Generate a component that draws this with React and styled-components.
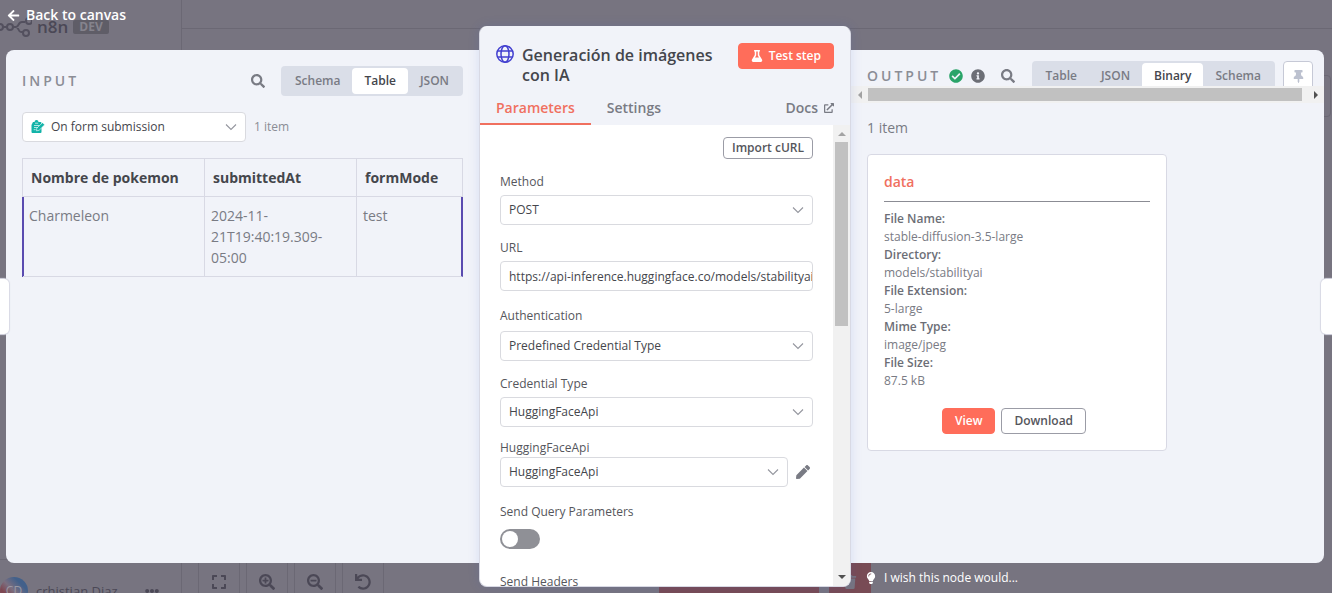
import React from "react";
import styled, { createGlobalStyle, css } from "styled-components";
import {
  FaArrowLeft,
  FaCheckCircle,
  FaExpand,
  FaExternalLinkAlt,
  FaEllipsisH,
  FaFlask,
  FaInfoCircle,
  FaLightbulb,
  FaPen,
  FaSearch,
  FaSearchMinus,
  FaSearchPlus,
  FaThumbtack,
  FaTrash,
  FaUndo,
} from "react-icons/fa";

const c = {
  veil: "#777480",
  veilLine: "#6b6874",
  veilInk: "#4b4856",
  danger: "#784b55",
  panel: "#f1f3f9",
  white: "#ffffff",
  line: "#d8d9e4",
  inputLine: "#d9dadf",
  tabs: "#dadee8",
  coral: "#ff6d5a",
  coralText: "#f0705f",
  ink: "#44464c",
  text: "#55565c",
  muted: "#797b84",
  faint: "#8b8d96",
  green: "#2aa469",
  purple: "#5a4bb0",
  track: "#f1f1f1",
  thumb: "#c1c1c1",
};

const GlobalStyle = createGlobalStyle`
  *, *::before, *::after { box-sizing: border-box; }
  body {
    margin: 0;
    background: ${c.veil};
    color: ${c.text};
    font: 400 12px/18px "Open Sans", "Noto Sans", sans-serif;
  }
  button, input, select { font: inherit; color: inherit; margin: 0; }
  button { cursor: pointer; padding: 0; border: 0; background: none; }
  a { color: inherit; text-decoration: none; }
  svg { display: block; flex: none; }
`;

const Screen = styled.div`
  position: relative;
  height: 100vh;
  overflow: hidden;
`;

/* ---------- dimmed editor behind the dialog ---------- */

const Backdrop = styled.div`
  position: absolute;
  inset: 0;
  display: flex;
  color: ${c.veilInk};
`;

const Sidebar = styled.div`
  width: 182px;
  flex: none;
  display: flex;
  flex-direction: column;
  justify-content: space-between;
  border-right: 1px solid ${c.veilLine};
`;

const Brand = styled.div`
  display: flex;
  align-items: center;
  gap: 5px;
  padding-top: 16px;
  font-size: 17px;
  line-height: 22px;
  font-weight: 600;
`;

const DevBadge = styled.span`
  padding: 0 6px;
  border-radius: 2px;
  background: #5f5d67;
  color: #85838d;
  font-size: 12px;
  line-height: 14px;
  font-weight: 700;
`;

const UserRow = styled.div`
  display: flex;
  align-items: center;
  height: 54px;
  margin-bottom: -20px;
  border-top: 1px solid ${c.veilLine};
  padding-top: 8px;
`;

const UserName = styled.span`
  padding: 0 14px 0 8px;
  font-size: 13px;
  white-space: nowrap;
`;

const Avatar = styled.span`
  width: 28px;
  height: 28px;
  flex: none;
  border-radius: 50%;
  background: linear-gradient(45deg, #7e4752 30%, #7b6f80 50%, #42608a 75%);
  color: #9b99a4;
  text-align: center;
  line-height: 28px;
`;

const Canvas = styled.div`
  flex: 1;
  min-width: 0;
  display: flex;
  flex-direction: column;
  justify-content: space-between;
`;

const CanvasTop = styled.div`
  display: flex;
  flex-direction: column;
  align-items: flex-end;
  gap: 46px;
`;

const TopBar = styled.div`
  align-self: stretch;
  height: 29px;
  border-bottom: 1px solid ${c.veilLine};
`;

const NodeMenu = styled.div`
  width: 42px;
  height: 42px;
  margin-right: 1px;
  border: 1px solid ${c.veilLine};
  border-radius: 4px;
`;

const CanvasFooter = styled.div`
  display: flex;
  align-items: flex-end;
  justify-content: space-between;
  height: 34px;
`;

const CanvasTools = styled.div`
  display: flex;
  gap: 6px;
  padding-left: 16px;
`;

const CanvasTool = styled.button`
  display: grid;
  place-items: center;
  width: 42px;
  height: 34px;
  padding-top: 12px;
  border: solid ${c.veilLine};
  border-width: 0 1px;
`;

const DangerTools = styled.div`
  display: flex;
  gap: 10px;
  flex: 1;
  padding-left: 275px;
`;

const DangerTool = styled.button`
  display: grid;
  place-items: center;
  width: ${(p) => (p.$wide ? 160 : 42)}px;
  height: 34px;
  padding-top: 12px;
  background: ${c.danger};
  color: ${c.veil};
`;

/* ---------- dialog frame ---------- */

const Dialog = styled.main`
  position: relative;
  height: 100%;
  display: flex;
  flex-direction: column;
`;

const BackButton = styled.button`
  display: flex;
  align-items: center;
  align-self: flex-start;
  gap: 6px;
  height: 26px;
  padding: 4px 7px 0;
  color: ${c.white};
  font-size: 14px;
  font-weight: 600;
`;

const Columns = styled.div`
  flex: 1;
  min-height: 0;
  display: flex;
  padding: 0 8px 0 6px;
`;

const SideColumn = styled.div`
  flex: 1;
  min-width: 0;
  display: flex;
  flex-direction: column;
  padding-top: 24px;
`;

const SidePanel = styled.section`
  flex: 1;
  min-height: 0;
  overflow: hidden;
  background: ${c.panel};
  border-radius: ${(p) => (p.$side === "left" ? "8px 0 0 8px" : "0 8px 8px 0")};
`;

const Footer = styled.div`
  display: flex;
  align-items: center;
  height: 30px;
  padding-left: 14px;
`;

const FeedbackLink = styled.a`
  display: flex;
  align-items: center;
  gap: 7px;
  color: ${c.white};
  font-weight: 500;
`;

const EdgeHandle = styled.button`
  position: absolute;
  top: 279px;
  ${(p) => (p.$side === "left" ? "left: 0" : "right: 0")};
  width: ${(p) => (p.$side === "left" ? 9 : 11)}px;
  height: 55px;
  background: ${c.white};
  border-radius: ${(p) => (p.$side === "left" ? "0 5px 5px 0" : "5px 0 0 5px")};
  box-shadow: 0 0 1px 1px ${c.line};
`;

/* ---------- shared pieces ---------- */

const PanelTitle = styled.h2`
  margin: 0;
  color: ${c.faint};
  font-size: 14px;
  line-height: 20px;
  font-weight: 600;
  letter-spacing: 3px;
`;

const IconButton = styled.button`
  display: grid;
  place-items: center;
  color: ${(p) => p.$color || c.muted};
`;

const TabGroup = styled.div`
  display: flex;
  flex: none;
  height: 30px;
  padding: 2px;
  border-radius: 4px;
  background: ${c.tabs};
`;

const ViewTab = styled.button`
  padding: 0 12px;
  border-radius: 4px;
  color: ${c.muted};
  font-weight: 600;
  ${(p) =>
    p.$active &&
    css`
      background: ${c.white};
      color: ${c.ink};
    `}
`;

const SelectShell = styled.div`
  position: relative;
  flex: 1;
  display: flex;
  align-items: center;
  height: 30px;
  border: 1px solid ${c.inputLine};
  border-radius: 4px;
  background: ${c.white};
`;

const SelectIcon = styled.span`
  position: absolute;
  left: 8px;
  pointer-events: none;
`;

const NativeSelect = styled.select`
  appearance: none;
  width: 100%;
  height: 28px;
  padding: 0 30px 0 ${(p) => (p.$icon ? 28 : 8)}px;
  border: 0;
  border-radius: 4px;
  background: transparent;
  color: ${c.ink};
`;

const Chevron = styled.svg`
  position: absolute;
  right: 8px;
  pointer-events: none;
  fill: none;
  stroke: #94969e;
`;

const Button = styled.button`
  flex: none;
  display: inline-flex;
  align-items: center;
  justify-content: center;
  gap: 6px;
  height: ${(p) => (p.$small ? 22 : 26)}px;
  padding: 0 ${(p) => (p.$small ? 8 : 12)}px;
  border: 1px solid ${(p) => (p.$primary ? c.coral : "#9b9ca6")};
  border-radius: 4px;
  background: ${(p) => (p.$primary ? c.coral : c.white)};
  color: ${(p) => (p.$primary ? c.white : c.text)};
  font-weight: 600;
`;

/* ---------- input panel ---------- */

const PanelBody = styled.div`
  padding: 16px;
`;

const PanelHeader = styled.header`
  display: flex;
  align-items: center;
  gap: 16px;
  ${PanelTitle} {
    margin-right: auto;
  }
`;

const SourceRow = styled.div`
  display: flex;
  align-items: center;
  gap: 8px;
  margin: 16px 0;
`;

const SourceSelect = styled.div`
  display: flex;
  width: 224px;
`;

const Count = styled.span`
  color: ${c.faint};
`;

const DataTable = styled.table`
  width: 100%;
  table-layout: fixed;
  border-collapse: separate;
  border-spacing: 0;
  border-left: 1px solid ${c.line};
  border-top: 1px solid ${c.line};
  font-size: 14px;
  line-height: 21px;
  text-align: left;
  th,
  td {
    border: solid ${c.line};
    border-width: 0 1px 1px 0;
    vertical-align: top;
  }
  th {
    padding: 8px;
    color: ${c.ink};
    font-weight: 700;
  }
  th:nth-child(1) {
    width: 182px;
  }
  th:nth-child(2) {
    width: 152px;
  }
  td {
    padding: 8px 6px;
    color: ${c.muted};
  }
  tbody td:first-child {
    box-shadow: inset 1px 0 ${c.purple}, -1px 0 ${c.purple};
  }
  tbody td:last-child {
    border-right: 2px solid ${c.purple};
  }
`;

/* ---------- node settings ---------- */

const NodeShadow = styled.div`
  display: flex;
  flex: none;
  z-index: 1;
  margin-bottom: 6px;
  border-radius: 8px;
  box-shadow: 0 0 12px rgba(60, 90, 200, 0.14);
`;

const NodePanel = styled.section`
  width: 372px;
  flex: none;
  display: flex;
  flex-direction: column;
  overflow: hidden;
  border: 1px solid ${c.line};
  border-top-color: ${c.panel};
  border-radius: 8px;
  background: ${c.white};
`;

const NodeHeader = styled.header`
  background: ${c.panel};
`;

const TitleRow = styled.div`
  display: flex;
  align-items: flex-start;
  gap: 8px;
  padding: 16px 16px 0;
`;

const NodeIcon = styled.span`
  padding-top: 2px;
`;

const NodeTitle = styled.h1`
  flex: 1;
  margin: 2px 0 0;
  color: ${c.ink};
  font-size: 16px;
  line-height: 20px;
  font-weight: 600;
`;

const NodeTabs = styled.nav`
  display: flex;
  align-items: center;
  height: 40px;
  padding-right: 16px;
  color: ${c.muted};
  font-size: 14px;
  font-weight: 600;
`;

const NodeTab = styled.button`
  height: 40px;
  padding: 8px 16px 0;
  border-bottom: 2px solid transparent;
  ${(p) =>
    p.$active &&
    css`
      color: ${c.coralText};
      border-color: ${c.coralText};
    `}
`;

const DocsLink = styled.a`
  display: flex;
  align-items: center;
  gap: 6px;
  margin-left: auto;
  padding-top: 6px;
`;

const NodeBody = styled.div`
  flex: 1;
  min-height: 0;
  display: flex;
`;

const Form = styled.form`
  flex: 1;
  min-width: 0;
  overflow: hidden;
  display: flex;
  flex-direction: column;
  padding: 12px 20px;
  > ${Button} {
    align-self: flex-end;
  }
`;

const Field = styled.div`
  flex: none;
  display: flex;
  flex-direction: column;
  gap: ${(p) => p.$gap ?? 4}px;
  margin-top: ${(p) => p.$top ?? 14}px;
`;

const Label = styled.label`
  color: ${c.text};
`;

const TextInput = styled.input`
  width: 100%;
  height: 30px;
  padding: 0 0 0 8px;
  border: 1px solid ${c.inputLine};
  border-radius: 4px;
  color: ${c.ink};
`;

const WithAction = styled.div`
  display: flex;
  gap: 8px;
  padding-right: 3px;
`;

const Switch = styled.input`
  appearance: none;
  display: flex;
  align-items: center;
  width: 40px;
  height: 20px;
  padding: 2px;
  border-radius: 10px;
  background: #8f9096;
  &::before {
    content: "";
    width: 16px;
    height: 16px;
    border-radius: 50%;
    background: ${c.white};
  }
`;

/* ---------- scroll bars ---------- */

const ScrollTrack = styled.div`
  flex: none;
  display: flex;
  flex-direction: ${(p) => (p.$vertical ? "column" : "row")};
  align-items: center;
  justify-content: space-between;
  background: ${c.track};
  ${(p) => (p.$vertical ? "width: 17px; padding: 5px 0;" : "height: 17px; padding: 0 5px;")}
`;

const ScrollRail = styled.div`
  flex: 1;
  display: flex;
  ${(p) => (p.$vertical ? "width: 13px; margin: 4px 0;" : "height: 13px; margin: 0 9px 0 4px;")}
`;

const ScrollThumb = styled.div`
  background: ${c.thumb};
  ${(p) => (p.$vertical ? "width: 100%; height: 43%;" : "height: 100%; width: 100%;")}
`;

/* ---------- output panel ---------- */

const OutputHeader = styled.header`
  display: flex;
  align-items: flex-start;
  height: 36px;
  padding: 11px 0 0 16px;
  overflow: hidden;
`;

const OutputTools = styled.div`
  display: flex;
  align-items: center;
  gap: 8px;
  height: 30px;
  margin-right: auto;
`;

const SearchSlot = styled.div`
  padding-left: 8px;
`;

const OutputTabs = styled.div`
  display: flex;
  gap: 8px;
  padding-right: 11px;
`;

const PinButton = styled.button`
  display: grid;
  place-items: center;
  width: 30px;
  height: 30px;
  border: 1px solid #c6c9d6;
  border-radius: 4px;
  background: ${c.white};
  color: #bcc1cf;
`;

const OutputBody = styled.div`
  padding: 14px 16px;
`;

const ItemCount = styled.p`
  margin: 0 0 15px;
  color: ${c.muted};
  font-size: 14px;
  line-height: 22px;
`;

const FileCard = styled.article`
  max-width: 300px;
  padding: 16px;
  border: 1px solid ${c.line};
  border-radius: 4px;
  background: ${c.white};
`;

const FileTitle = styled.h3`
  margin: 0 0 8px;
  padding-bottom: 8px;
  border-bottom: 1px solid #8b8c94;
  color: ${c.coralText};
  font-size: 14px;
  line-height: 22px;
  font-weight: 600;
`;

const FileFacts = styled.dl`
  margin: 0 0 18px;
  color: ${c.muted};
  dt {
    color: #6c6e76;
    font-weight: 600;
  }
  dd {
    margin: 0;
  }
`;

const FileActions = styled.div`
  display: flex;
  justify-content: center;
  ${Button} {
    margin-right: 6px;
  }
`;

function Select({ id, label, value, icon }) {
  return (
    <SelectShell>
      {icon && <SelectIcon>{icon}</SelectIcon>}
      <NativeSelect id={id} aria-label={label} $icon={!!icon} defaultValue={value}>
        <option>{value}</option>
      </NativeSelect>
      <Chevron width="12" height="12" viewBox="0 0 12 12">
        <path d="M1 3.5 6 8.5 11 3.5" strokeWidth="1.1" />
      </Chevron>
    </SelectShell>
  );
}

function SelectField({ id, label, value, top, gap }) {
  return (
    <Field $top={top} $gap={gap}>
      <Label htmlFor={id}>{label}</Label>
      <Select id={id} value={value} />
    </Field>
  );
}

function ViewTabs({ names, active }) {
  return (
    <TabGroup role="tablist">
      {names.map((name) => (
        <ViewTab key={name} role="tab" aria-selected={name === active} $active={name === active}>
          {name}
        </ViewTab>
      ))}
    </TabGroup>
  );
}

const arrows = {
  up: "M0 6 4 2 8 6Z",
  down: "M0 2 4 6 8 2Z",
  left: "M6 0 2 4 6 8Z",
  right: "M3 0 7 4 3 8Z",
};

function Arrow({ dir, color }) {
  return (
    <svg width="8" height="8" viewBox="0 0 8 8" fill={color}>
      <path d={arrows[dir]} />
    </svg>
  );
}

function ScrollBar({ vertical }) {
  return (
    <ScrollTrack $vertical={vertical} aria-hidden="true">
      <Arrow dir={vertical ? "up" : "left"} color="#a3a3a3" />
      <ScrollRail $vertical={vertical}>
        <ScrollThumb $vertical={vertical} />
      </ScrollRail>
      <Arrow dir={vertical ? "down" : "right"} color="#505050" />
    </ScrollTrack>
  );
}

function GlobeIcon() {
  return (
    <svg width="18" height="18" viewBox="0 0 18 18" fill="none" stroke="#4340d0" strokeWidth="1.5">
      <circle cx="9" cy="9" r="8.2" />
      <ellipse cx="9" cy="9" rx="4" ry="8.2" />
      <path d="M1.6 6H16.4M1.6 12H16.4" />
    </svg>
  );
}

function FormIcon() {
  return (
    <svg width="14" height="14" viewBox="0 0 14 14">
      <path fill="#12b3a8" d="M2 2h1.500a2 2 0 0 1 4 0H9.500a1 1 0 0 1 1 1v9a1 1 0 0 1-1 1H1.500a1 1 0 0 1-1-1V5Z" />
      <path stroke="#d5f3f0" strokeWidth=".8" d="M3 5.500h5.500M3 7.500h4M2.700 9.700h2M4 3.200h3.200" />
      <path fill="#12b3a8" stroke="#ffffff" strokeWidth=".6" d="m5.800 8.200 5.700-5.500 2.200 2.100-5.600 5.500-2.600.5Z" />
    </svg>
  );
}

function LogoMark() {
  return (
    <svg width="32" height="22" viewBox="0 0 32 22" fill="none" stroke="#53505e" strokeWidth="2">
      <circle cx="0" cy="11" r="3" />
      <circle cx="10" cy="11" r="3" />
      <path d="M3 11h4M13 11h3c3 0 2-5 6-5h3M16 11c3 0 2 5 5 5h2" />
      <circle cx="29" cy="5" r="3" />
      <circle cx="26" cy="17" r="3" />
    </svg>
  );
}

function EditorBackdrop() {
  return (
    <Backdrop aria-hidden="true">
      <Sidebar>
        <Brand>
          <LogoMark />
          n8n
          <DevBadge>DEV</DevBadge>
        </Brand>
        <UserRow>
          <Avatar>CD</Avatar>
          <UserName>crhistian Diaz ...</UserName>
          <FaEllipsisH size={14} />
        </UserRow>
      </Sidebar>
      <Canvas>
        <CanvasTop>
          <TopBar />
          <NodeMenu />
        </CanvasTop>
        <CanvasFooter>
          <CanvasTools>
            {[FaExpand, FaSearchPlus, FaSearchMinus, FaUndo].map((Icon, i) => (
              <CanvasTool key={i} tabIndex={-1}>
                <Icon size={16} />
              </CanvasTool>
            ))}
          </CanvasTools>
          <DangerTools>
            <DangerTool $wide tabIndex={-1} />
            <DangerTool tabIndex={-1}>
              <FaTrash size={14} />
            </DangerTool>
          </DangerTools>
        </CanvasFooter>
      </Canvas>
    </Backdrop>
  );
}

function InputPanel() {
  return (
    <SidePanel $side="left">
      <PanelBody>
        <PanelHeader>
          <PanelTitle>INPUT</PanelTitle>
          <IconButton aria-label="Search input">
            <FaSearch size={14} />
          </IconButton>
          <ViewTabs names={["Schema", "Table", "JSON"]} active="Table" />
        </PanelHeader>
        <SourceRow>
          <SourceSelect>
            <Select label="Source node" value="On form submission" icon={<FormIcon />} />
          </SourceSelect>
          <Count>1 item</Count>
        </SourceRow>
        <DataTable>
          <thead>
            <tr>
              <th>Nombre de pokemon</th>
              <th>submittedAt</th>
              <th>formMode</th>
            </tr>
          </thead>
          <tbody>
            <tr>
              <td>Charmeleon</td>
              <td>2024-11-21T19:40:19.309-05:00</td>
              <td>test</td>
            </tr>
          </tbody>
        </DataTable>
      </PanelBody>
    </SidePanel>
  );
}

function NodeSettings() {
  return (
    <NodeShadow>
      <NodePanel>
        <NodeHeader>
          <TitleRow>
            <NodeIcon>
              <GlobeIcon />
            </NodeIcon>
            <NodeTitle>Generación de imágenes con IA</NodeTitle>
            <Button $primary>
              <FaFlask size={12} />
              Test step
            </Button>
          </TitleRow>
          <NodeTabs>
            <NodeTab $active>Parameters</NodeTab>
            <NodeTab>Settings</NodeTab>
            <DocsLink href="#docs">
              Docs
              <FaExternalLinkAlt size={10} />
            </DocsLink>
          </NodeTabs>
        </NodeHeader>
        <NodeBody>
          <Form onSubmit={(e) => e.preventDefault()}>
            <Button type="button" $small>
              Import cURL
            </Button>
            <SelectField id="method" label="Method" value="POST" />
            <Field>
              <Label htmlFor="url">URL</Label>
              <TextInput
                id="url"
                defaultValue="https://api-inference.huggingface.co/models/stabilityai/stable-diffusion-3.5-large"
              />
            </Field>
            <SelectField id="auth" label="Authentication" value="Predefined Credential Type" top={16} gap={6} />
            <SelectField id="cred-type" label="Credential Type" value="HuggingFaceApi" />
            <Field $top={12} $gap={0}>
              <Label htmlFor="cred">HuggingFaceApi</Label>
              <WithAction>
                <Select id="cred" value="HuggingFaceApi" />
                <IconButton type="button" aria-label="Edit credential">
                  <FaPen size={14} />
                </IconButton>
              </WithAction>
            </Field>
            <Field $top={16} $gap={8}>
              <Label htmlFor="query">Send Query Parameters</Label>
              <Switch id="query" type="checkbox" role="switch" />
            </Field>
            <Field $top={24} $gap={8}>
              <Label htmlFor="headers">Send Headers</Label>
              <Switch id="headers" type="checkbox" role="switch" />
            </Field>
          </Form>
          <ScrollBar vertical />
        </NodeBody>
      </NodePanel>
    </NodeShadow>
  );
}

const facts = [
  ["File Name:", "stable-diffusion-3.5-large"],
  ["Directory:", "models/stabilityai"],
  ["File Extension:", "5-large"],
  ["Mime Type:", "image/jpeg"],
  ["File Size:", "87.5 kB"],
];

function OutputPanel() {
  return (
    <SidePanel $side="right">
      <OutputHeader>
        <OutputTools>
          <PanelTitle>OUTPUT</PanelTitle>
          <FaCheckCircle size={14} color={c.green} />
          <FaInfoCircle size={14} color="#6c6e76" />
          <SearchSlot>
            <IconButton aria-label="Search output">
              <FaSearch size={14} />
            </IconButton>
          </SearchSlot>
        </OutputTools>
        <OutputTabs>
          <ViewTabs names={["Table", "JSON", "Binary", "Schema"]} active="Binary" />
          <PinButton aria-label="Pin data">
            <FaThumbtack size={13} />
          </PinButton>
        </OutputTabs>
      </OutputHeader>
      <ScrollBar />
      <OutputBody>
        <ItemCount>1 item</ItemCount>
        <FileCard>
          <FileTitle>data</FileTitle>
          <FileFacts>
            {facts.map(([term, value]) => (
              <React.Fragment key={term}>
                <dt>{term}</dt>
                <dd>{value}</dd>
              </React.Fragment>
            ))}
          </FileFacts>
          <FileActions>
            <Button $primary>View</Button>
            <Button>Download</Button>
          </FileActions>
        </FileCard>
      </OutputBody>
    </SidePanel>
  );
}

export default function App() {
  return (
    <Screen>
      <GlobalStyle />
      <EditorBackdrop />
      <Dialog>
        <BackButton>
          <FaArrowLeft size={13} />
          Back to canvas
        </BackButton>
        <Columns>
          <SideColumn>
            <InputPanel />
            <Footer />
          </SideColumn>
          <NodeSettings />
          <SideColumn>
            <OutputPanel />
            <Footer>
              <FeedbackLink href="#feedback">
                <FaLightbulb size={12} />
                I wish this node would...
              </FeedbackLink>
            </Footer>
          </SideColumn>
        </Columns>
        <EdgeHandle $side="left" aria-label="Previous node" />
        <EdgeHandle $side="right" aria-label="Next node" />
      </Dialog>
    </Screen>
  );
}
